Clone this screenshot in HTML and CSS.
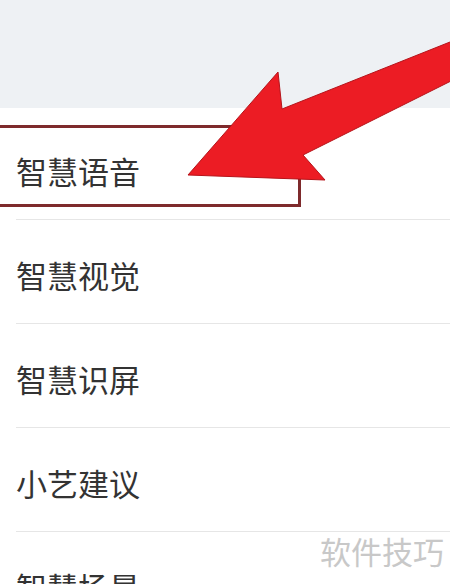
FILE: index.html
```html
<!DOCTYPE html>
<html lang="zh">
<head>
<meta charset="utf-8">
<link rel="stylesheet" href="styles.css">
</head>
<body>
<div class="screen">
  <div class="top"></div>
  <ul class="list">
    <li class="row"><span class="label">智慧语音</span></li>
    <li class="row"><span class="label">智慧视觉</span></li>
    <li class="row"><span class="label">智慧识屏</span></li>
    <li class="row"><span class="label">小艺建议</span></li>
    <li class="row"><span class="label">智慧场景</span></li>
  </ul>
  <div class="highlight"></div>
  <svg class="arrow" width="450" height="584" viewBox="0 0 450 584">
    <polygon points="188,175 278,72 282,109 455,40 455,79 303,155 325,180" fill="#ec1c24" stroke="#b5141a" stroke-width="1" stroke-linejoin="miter"/>
  </svg>
  <div class="watermark">软件技巧</div>
</div>
</body>
</html>
```
FILE: styles.css
```css
html, body {
  margin: 0;
  padding: 0;
  background: #ffffff;
}
.screen {
  position: relative;
  width: 450px;
  height: 584px;
  overflow: hidden;
  font-family: "Noto Sans CJK SC", "Noto Sans", sans-serif;
}
.top {
  height: 108px;
  background: #eef1f4;
}
.list {
  list-style: none;
  margin: 0;
  padding: 8px 0 0 0;
}
.row {
  height: 103px;
  margin-left: 16px;
  border-bottom: 1px solid #e6e6e6;
  display: flex;
  align-items: center;
}
.label {
  font-size: 31px;
  color: #333333;
  line-height: 1;
  padding-top: 5px;
}
.highlight {
  position: absolute;
  left: -3px;
  top: 125px;
  width: 298px;
  height: 76px;
  border: 3px solid #7e2a2c;
}
.arrow {
  position: absolute;
  left: 0;
  top: 0;
}
.watermark {
  position: absolute;
  left: 313px;
  top: 533px;
  right: 0;
  bottom: 0;
  background: #ffffff;
  padding-left: 7px;
  font-size: 31px;
  line-height: 36px;
  color: #c8c8c8;
}
```
